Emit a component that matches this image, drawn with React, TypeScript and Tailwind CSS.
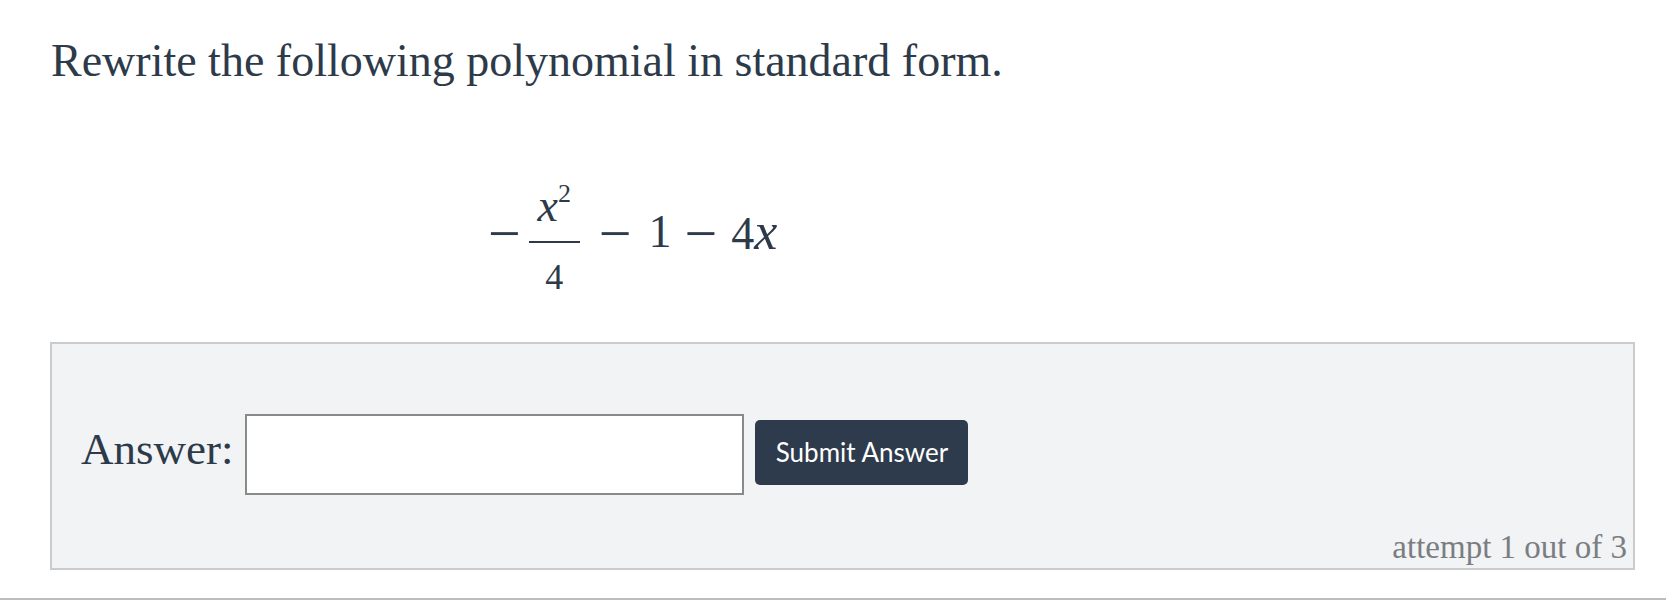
import React from "react"

const serif = "font-['Liberation_Serif',serif]"

function Minus({ className = "" }: { className?: string }) {
  return <span className={`${serif} text-[58px] leading-[58px] mt-[22px] ${className}`}>−</span>
}

export default function App() {
  return (
    <div className="h-[600px] bg-white border-b-2 border-[#bdbdbd] text-[#2d3a4a] overflow-hidden">
      {/* Prompt */}
      <h1 className={`${serif} ml-[51px] pt-[39px] text-[46px] leading-[44px] font-normal`}>
        Rewrite the following polynomial in standard form.
      </h1>

      {/* Expression */}
      <div className={`${serif} flex items-start ml-[488px] mt-[100px] h-[108px]`}>
        <Minus />
        <div className="flex flex-col items-center ml-[8px] w-[51px]">
          <div className="text-[46px] leading-[46px] mb-[5px] whitespace-nowrap">
            <span className="italic">x</span>
            <span className="relative -top-[19px] text-[26px]">2</span>
          </div>
          <div className="h-[2px] w-[51px] bg-[#2d3a4a]" />
          <div className="text-[36px] leading-[36px] mt-[16px]">4</div>
        </div>
        <Minus className="ml-[19px]" />
        <span className="text-[46px] leading-[46px] mt-[26px] ml-[17px]">1</span>
        <Minus className="ml-[13px]" />
        <span className="text-[46px] leading-[46px] mt-[26px] ml-[14px] whitespace-nowrap">
          4<span className="italic text-[52px]">x</span>
        </span>
      </div>

      {/* Answer box */}
      <div className="ml-[50px] mr-[31px] mt-[51px] border-2 border-[#cbcbcb] bg-[#f2f3f5] pt-[70px] pb-[5px]">
        <div className="flex items-start pl-[29px]">
          <label className={`${serif} text-[45px] leading-[44px] mt-[13px]`}>Answer:</label>
          <input
            type="text"
            className="ml-[12px] w-[499px] h-[81px] border-2 border-[#8a8a8a] bg-white outline-none px-3 text-[28px]"
          />
          <button className="ml-[11px] mt-[6px] w-[213px] h-[65px] rounded-[5px] bg-[#2e3b4c] text-white font-['Lato',sans-serif] text-[26px]">
            Submit Answer
          </button>
        </div>
        <div className={`${serif} mt-[37px] text-right pr-[6px] text-[33px] leading-[31px] text-[#7a7d82]`}>
          attempt 1 out of 3
        </div>
      </div>
    </div>
  )
}
